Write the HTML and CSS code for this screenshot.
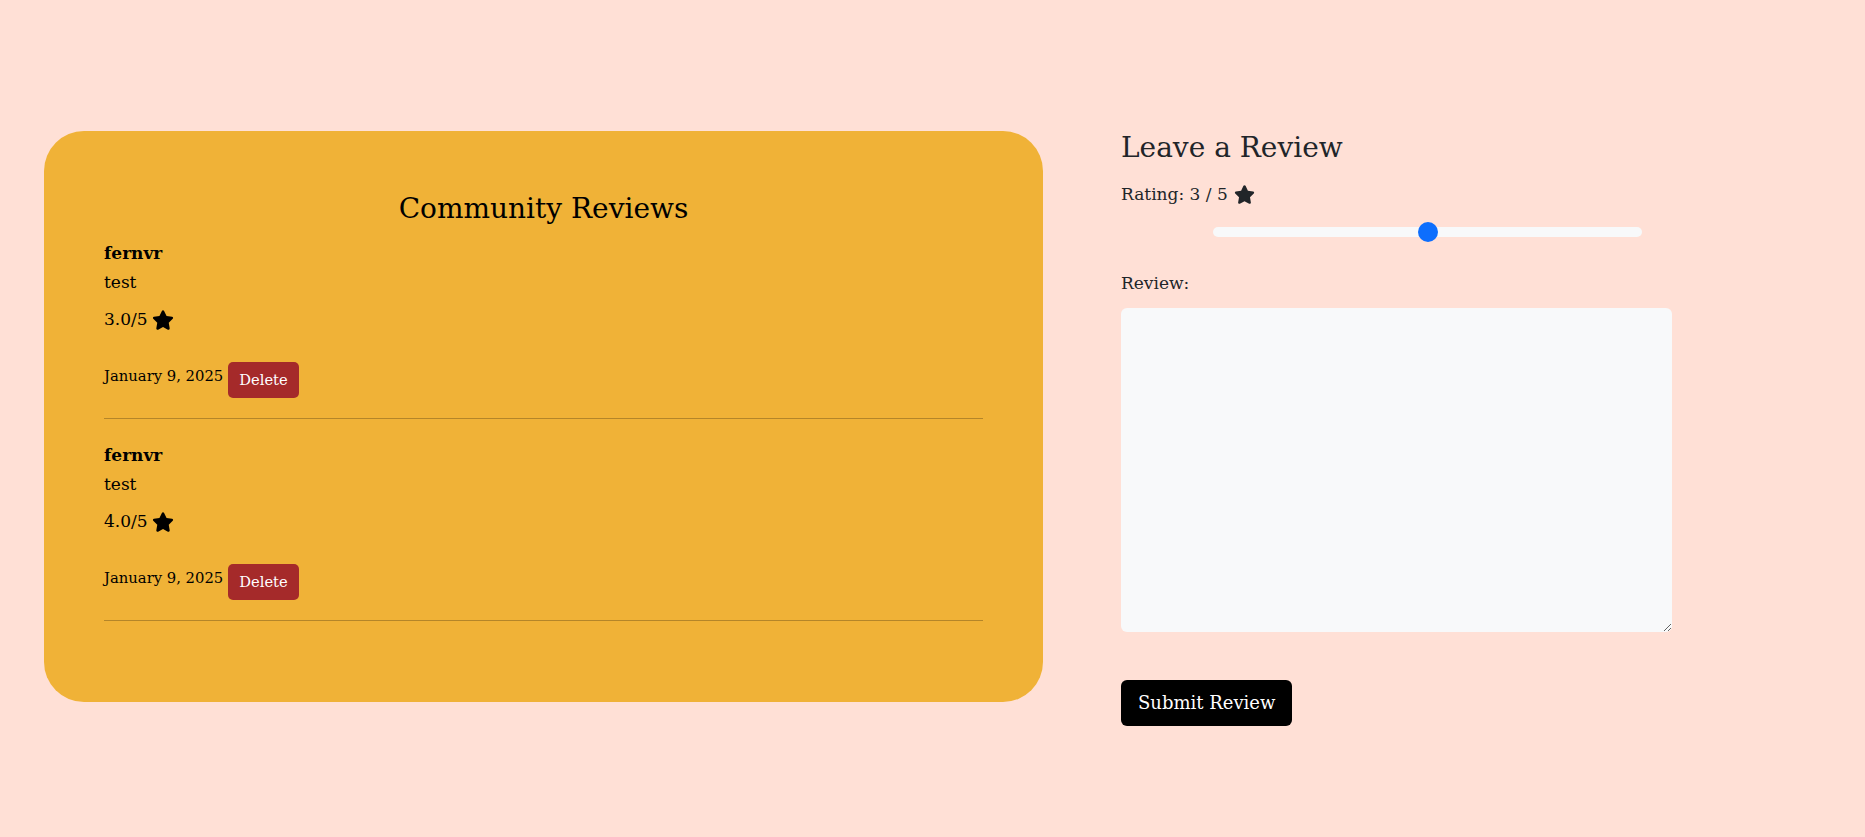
FILE: index.html
```html
<!DOCTYPE html>
<html lang="en">
<head>
<meta charset="utf-8">
<title>Reviews</title>
<link rel="stylesheet" href="styles.css">
</head>
<body>
<main class="page">
  <section class="reviews-card">
    <h2 class="card-title">Community Reviews</h2>
    <div class="review">
      <div class="review-name">fernvr</div>
      <p class="review-text">test</p>
      <p class="review-rating">3.0/5 <svg class="star" viewBox="0 0 576 512" aria-hidden="true"><path d="M316.9 18C311.6 7 300.4 0 288.1 0s-23.4 7-28.8 18L195 150.3 51.4 171.5c-12 1.8-22 10.2-25.7 21.7s-.7 24.2 7.9 32.7L137.8 329 113.2 474.7c-2 12 3 24.2 12.9 31.3s23 8 33.8 2.3l128.3-68.5 128.3 68.5c10.8 5.7 23.9 4.9 33.8-2.3s14.9-19.3 12.9-31.3L438.5 329 542.7 225.9c8.6-8.5 11.7-21.2 7.9-32.7s-13.7-19.9-25.7-21.7L381.2 150.3 316.9 18z"/></svg></p>
      <div class="review-meta"><span class="review-date">January 9, 2025</span><button class="btn-delete" type="button">Delete</button></div>
      <hr class="divider">
    </div>
    <div class="review">
      <div class="review-name">fernvr</div>
      <p class="review-text">test</p>
      <p class="review-rating">4.0/5 <svg class="star" viewBox="0 0 576 512" aria-hidden="true"><path d="M316.9 18C311.6 7 300.4 0 288.1 0s-23.4 7-28.8 18L195 150.3 51.4 171.5c-12 1.8-22 10.2-25.7 21.7s-.7 24.2 7.9 32.7L137.8 329 113.2 474.7c-2 12 3 24.2 12.9 31.3s23 8 33.8 2.3l128.3-68.5 128.3 68.5c10.8 5.7 23.9 4.9 33.8-2.3s14.9-19.3 12.9-31.3L438.5 329 542.7 225.9c8.6-8.5 11.7-21.2 7.9-32.7s-13.7-19.9-25.7-21.7L381.2 150.3 316.9 18z"/></svg></p>
      <div class="review-meta"><span class="review-date">January 9, 2025</span><button class="btn-delete" type="button">Delete</button></div>
      <hr class="divider">
    </div>
  </section>
  <section class="review-form">
    <h3 class="form-title">Leave a Review</h3>
    <label class="rating-label" for="rating">Rating: 3 / 5 <svg class="star star-dark" viewBox="0 0 576 512" aria-hidden="true"><path d="M316.9 18C311.6 7 300.4 0 288.1 0s-23.4 7-28.8 18L195 150.3 51.4 171.5c-12 1.8-22 10.2-25.7 21.7s-.7 24.2 7.9 32.7L137.8 329 113.2 474.7c-2 12 3 24.2 12.9 31.3s23 8 33.8 2.3l128.3-68.5 128.3 68.5c10.8 5.7 23.9 4.9 33.8-2.3s14.9-19.3 12.9-31.3L438.5 329 542.7 225.9c8.6-8.5 11.7-21.2 7.9-32.7s-13.7-19.9-25.7-21.7L381.2 150.3 316.9 18z"/></svg></label>
    <div class="slider-wrap"><input id="rating" class="range" type="range" min="1" max="5" step="1" value="3"></div>
    <label class="review-label" for="review">Review:</label>
    <textarea id="review" class="review-input"></textarea>
    <button class="btn-submit" type="button">Submit Review</button>
  </section>
</main>
</body>
</html>
```
FILE: styles.css
```css
* { box-sizing: border-box; }

html, body {
  margin: 0;
  padding: 0;
}

body {
  background: #ffe0d6;
  font-family: "DejaVu Serif", "Liberation Serif", serif;
  font-size: 17px;
  line-height: 25px;
  color: #212529;
  min-height: 837px;
}

.page {
  display: flex;
  align-items: flex-start;
  padding: 131px 0 0 44px;
}

/* ---------- Reviews card ---------- */
.reviews-card {
  width: 999px;
  flex: none;
  background: #f0b237;
  border-radius: 40px;
  padding: 61px 60px 57px 60px;
  color: #000;
}

.card-title {
  margin: 0 0 15px;
  font-size: 28px;
  line-height: 34px;
  font-weight: 400;
  text-align: center;
}

.review-name {
  font-weight: 700;
}

.review-text {
  margin: 4px 0 0;
}

.review-rating {
  margin: 12px 0 0;
  display: flex;
  align-items: center;
  gap: 4px;
}

.star {
  width: 22px;
  height: 20px;
  fill: #000;
  flex: none;
}

.star-dark {
  fill: #212529;
  width: 21px;
  height: 19px;
}

.review-meta {
  margin-top: 30px;
  display: flex;
  align-items: flex-start;
  gap: 5px;
}

.review-date {
  font-size: 14.8px;
  line-height: 20px;
  padding-top: 4px;
}

.btn-delete {
  font-family: inherit;
  font-size: 14.7px;
  line-height: 24px;
  padding: 6px 11px;
  border: 0;
  border-radius: 5px;
  background: #a52a2a;
  color: #fff;
}

.divider {
  margin: 20px 0 24px;
  border: 0;
  border-top: 1px solid rgba(0, 0, 0, 0.25);
}

/* ---------- Form ---------- */
.review-form {
  margin-left: 78px;
  width: 613px;
  display: flex;
  flex-direction: column;
  align-items: flex-start;
}

.form-title {
  margin: 0;
  font-size: 28px;
  line-height: 34px;
  font-weight: 400;
}

.rating-label {
  margin-top: 17px;
  display: flex;
  align-items: center;
  gap: 6px;
}

.slider-wrap {
  margin-top: 15px;
  align-self: stretch;
  display: flex;
  justify-content: center;
}

.range {
  -webkit-appearance: none;
  appearance: none;
  width: 429px;
  height: 20px;
  margin: 0;
  background: transparent;
}

.range::-webkit-slider-runnable-track {
  height: 10px;
  border-radius: 5px;
  background: #f8f9fa;
}

.range::-webkit-slider-thumb {
  -webkit-appearance: none;
  appearance: none;
  width: 20px;
  height: 20px;
  margin-top: -5px;
  border-radius: 50%;
  border: 0;
  background: #0d6efd;
}

.review-label {
  margin-top: 29px;
}

.review-input {
  margin-top: 12px;
  width: 551px;
  height: 324px;
  border: 0;
  border-radius: 6px;
  background: #f8f9fa;
  font-family: inherit;
  font-size: 17px;
  padding: 6px 12px;
}

.btn-submit {
  margin-top: 48px;
  font-family: inherit;
  font-size: 18px;
  line-height: 26px;
  padding: 10px 17px;
  border: 0;
  border-radius: 6px;
  background: #000;
  color: #fff;
}
```
